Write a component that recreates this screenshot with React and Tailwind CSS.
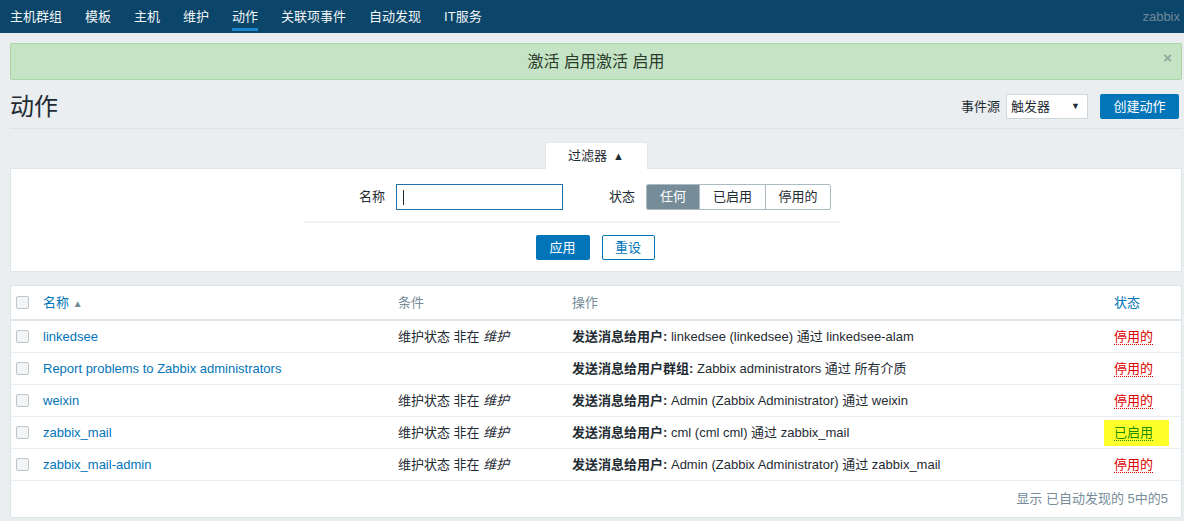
const font = { fontFamily: '"Liberation Sans", Arial, "Noto Sans CJK SC", sans-serif' };

const navItems = ["主机群组", "模板", "主机", "维护", "动作", "关联项事件", "自动发现", "IT服务"];

const rows = [
  {
    name: "linkedsee",
    cond: true,
    opLabel: "发送消息给用户:",
    op: "linkedsee (linkedsee) 通过 linkedsee-alam",
    enabled: false,
  },
  {
    name: "Report problems to Zabbix administrators",
    cond: false,
    opLabel: "发送消息给用户群组:",
    op: "Zabbix administrators 通过 所有介质",
    enabled: false,
  },
  {
    name: "weixin",
    cond: true,
    opLabel: "发送消息给用户:",
    op: "Admin (Zabbix Administrator) 通过 weixin",
    enabled: false,
  },
  {
    name: "zabbix_mail",
    cond: true,
    opLabel: "发送消息给用户:",
    op: "cml (cml cml) 通过 zabbix_mail",
    enabled: true,
  },
  {
    name: "zabbix_mail-admin",
    cond: true,
    opLabel: "发送消息给用户:",
    op: "Admin (Zabbix Administrator) 通过 zabbix_mail",
    enabled: false,
  },
];

function Checkbox() {
  return <span className="block w-[13px] h-[13px] rounded-[2px] border border-[#bfc6ca] bg-[#f3f4f5]" />;
}

export default function App() {
  return (
    <div style={font} className="min-h-screen bg-[#ebeef0] text-[13px] text-[#1f2c33]">
      {/* Top nav */}
      <header className="h-[33px] bg-[#0b466a] flex items-center justify-between pl-[10px] pr-[4px]">
        <nav className="flex h-full">
          {navItems.map((item, i) => (
            <span
              key={item}
              className={
                "relative h-full flex items-center text-[13px] text-[#f2f5f7] " +
                (i === 0 ? "pr-[11.5px]" : "px-[11.5px]")
              }
            >
              {item}
              {item === "动作" && (
                <span className="absolute left-[11.5px] right-[11.5px] bottom-[2px] h-[3px] bg-[#1f86cc]" />
              )}
            </span>
          ))}
        </nav>
        <span className="text-[#6f8797] text-[13px]">zabbix</span>
      </header>

      <main className="pl-[10px] pr-[2px]">
        {/* Message */}
        <div className="relative mt-[10px] h-[37px] border border-[#a9d7a6] rounded-[2px] bg-[#c5e4c5] flex items-center justify-center text-[16px] text-[#2b3a2b]">
          激活 启用激活 启用
          <span className="absolute right-[9px] top-[3px] text-[#8fa79a] text-[15px] font-bold">×</span>
        </div>

        {/* Page header */}
        <div className="h-[49px] pt-[5px] flex items-center justify-between border-b border-[#dde2e5]">
          <h1 className="text-[24px] text-[#1f2c33] font-normal leading-none">动作</h1>
          <div className="flex items-center pr-[3px]">
            <span className="mr-[6px]">事件源</span>
            <div className="w-[82px] h-[25px] bg-white border border-[#cfd7db] flex items-center justify-between pl-[4px] pr-[7px]">
              <span>触发器</span>
              <span className="text-[9px]">▼</span>
            </div>
            <button className="ml-[12px] w-[79px] h-[25px] rounded-[2px] bg-[#0275b8] text-white">创建动作</button>
          </div>
        </div>

        {/* Filter */}
        <div className="mt-[13px] flex justify-center">
          <div className="w-[103px] h-[27px] -mb-px relative z-10 bg-white border border-b-0 border-[#e3e7ea] rounded-t-[2px] flex items-center justify-center gap-[6px]">
            <span>过滤器</span>
            <span className="text-[11px]">▲</span>
          </div>
        </div>
        <div className="h-[104px] bg-white border border-[#dfe4e7] pt-[15px]">
          <div className="ml-[292px] w-[537px]">
            <div className="flex items-center">
              <span className="w-[93px] text-right pr-[11px]">名称</span>
              <div className="w-[167px] h-[26px] border border-[#1f6fa8] flex items-center pl-[6px]">
                <span className="w-px h-[15px] bg-[#1f2c33]" />
              </div>
              <span className="ml-[46px] mr-[11px]">状态</span>
              <div className="flex h-[26px] rounded-[2px] border border-[#acbbc2] overflow-hidden">
                <span className="w-[52px] flex items-center justify-center bg-[#768d99] text-white">任何</span>
                <span className="w-[66px] flex items-center justify-center border-l border-[#acbbc2]">已启用</span>
                <span className="w-[65px] flex items-center justify-center border-l border-[#acbbc2]">停用的</span>
              </div>
            </div>
            <div className="mt-[11px] h-[2px] bg-[#f2f3f4]" />
          </div>
          <div className="mt-[12px] flex justify-center gap-[12px] pr-[2px]">
            <button className="w-[54px] h-[25px] rounded-[2px] bg-[#0275b8] text-white">应用</button>
            <button className="w-[53px] h-[25px] rounded-[2px] bg-white border border-[#0275b8] text-[#0275b8]">重设</button>
          </div>
        </div>

        {/* Table */}
        <div className="mt-[13px] h-[233px] bg-white border border-[#dfe4e7]">
          <div className="grid grid-cols-[32px_355px_174px_1fr_67px] items-center h-[35px] border-b-[2px] border-[#dfe4e7]">
            <span className="pl-[5px]"><Checkbox /></span>
            <span className="text-[#0275b8]">
              名称 <span className="text-[#768d99] text-[10px]">▲</span>
            </span>
            <span className="text-[#768d99]">条件</span>
            <span className="text-[#768d99]">操作</span>
            <span className="text-[#0275b8]">状态</span>
          </div>
          {rows.map((r) => (
            <div
              key={r.name}
              className="grid grid-cols-[32px_355px_174px_1fr_67px] items-center h-[32px] border-b border-[#ebeef0]"
            >
              <span className="pl-[5px]"><Checkbox /></span>
              <span className="text-[#0275b8]">{r.name}</span>
              <span>
                {r.cond && (
                  <>
                    维护状态 非在 <i>维护</i>
                  </>
                )}
              </span>
              <span>
                <b>{r.opLabel}</b> {r.op}
              </span>
              <span>
                {r.enabled ? (
                  <span className="inline-flex items-center -ml-[10px] pl-[10px] pr-[16px] h-[26px] bg-[#ffff2a]">
                    <span className="text-[#1f8c00] border-b border-dotted border-[#1f8c00] leading-[15px]">已启用</span>
                  </span>
                ) : (
                  <span className="text-[#dc0000] border-b border-dotted border-[#dc0000]">停用的</span>
                )}
              </span>
            </div>
          ))}
          <div className="h-[35px] flex items-center justify-end pr-[13px] text-[#768d99]">显示 已自动发现的 5中的5</div>
        </div>
      </main>
    </div>
  );
}
